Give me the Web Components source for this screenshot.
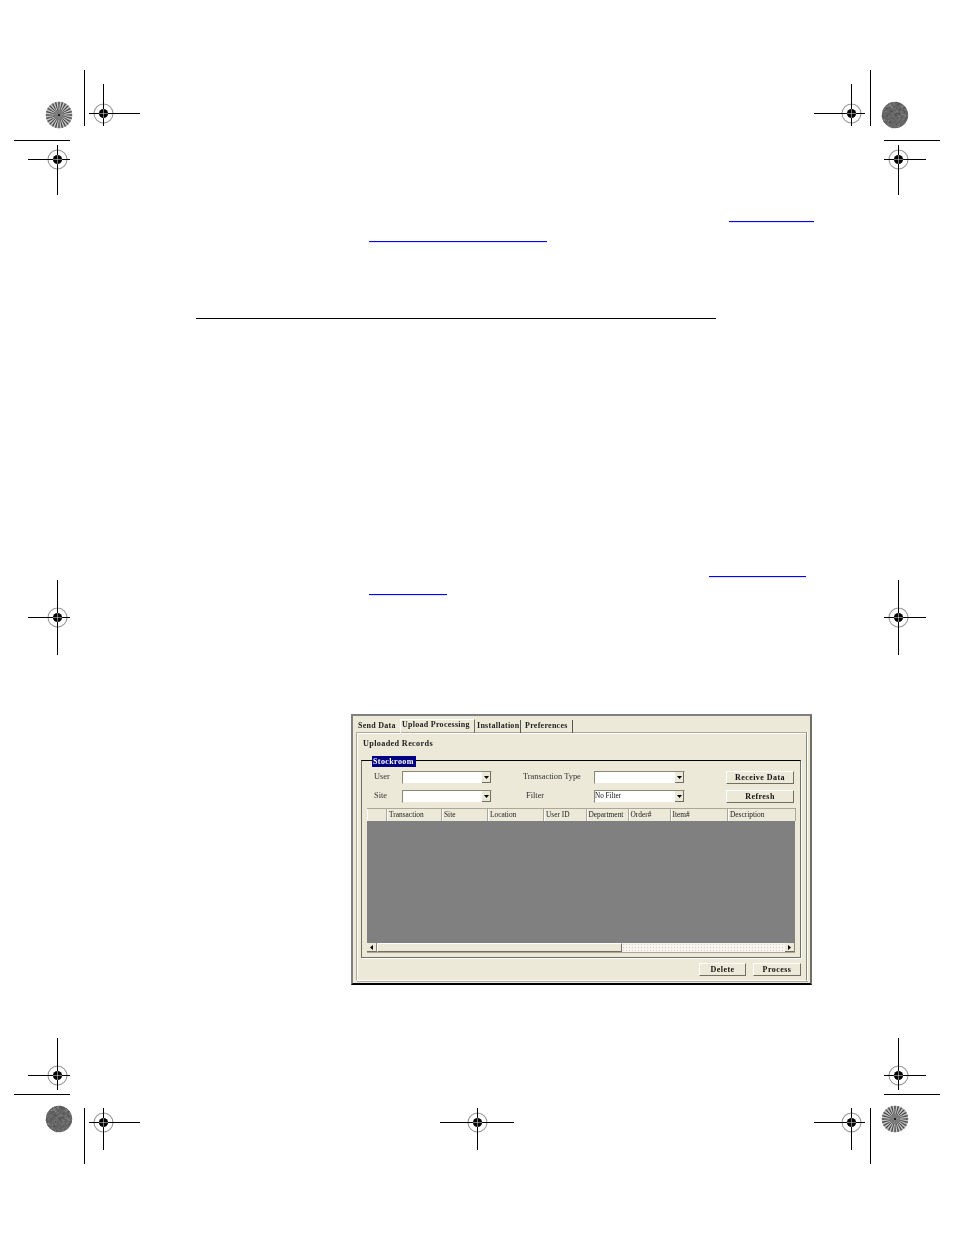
<!DOCTYPE html>
<html>
<head>
<meta charset="utf-8">
<title>Upload Processing</title>
<style>
  html, body { margin: 0; background: #fff; }
</style>
</head>
<body>
<doc-page>
  <crop-line slot="marks" x="84" y="70" h="56"></crop-line>
  <crop-line slot="marks" x="14" y="140" w="56"></crop-line>
  <crop-line slot="marks" x="870" y="70" h="56"></crop-line>
  <crop-line slot="marks" x="884" y="140" w="56"></crop-line>
  <crop-line slot="marks" x="14" y="1094" w="56"></crop-line>
  <crop-line slot="marks" x="84" y="1108" h="56"></crop-line>
  <crop-line slot="marks" x="884" y="1094" w="56"></crop-line>
  <crop-line slot="marks" x="870" y="1108" h="56"></crop-line>

  <reg-mark slot="marks" cx="103" cy="113" x1="89" x2="140" y1="84" y2="126"></reg-mark>
  <reg-mark slot="marks" cx="57" cy="159" x1="28" x2="70" y1="145" y2="195"></reg-mark>
  <reg-mark slot="marks" cx="851" cy="113" x1="814" x2="865" y1="84" y2="126"></reg-mark>
  <reg-mark slot="marks" cx="898" cy="159" x1="884" x2="926" y1="145" y2="195"></reg-mark>
  <reg-mark slot="marks" cx="57" cy="617" x1="28" x2="70" y1="580" y2="655"></reg-mark>
  <reg-mark slot="marks" cx="898" cy="617" x1="884" x2="926" y1="580" y2="655"></reg-mark>
  <reg-mark slot="marks" cx="57" cy="1075" x1="28" x2="70" y1="1038" y2="1090"></reg-mark>
  <reg-mark slot="marks" cx="898" cy="1075" x1="884" x2="926" y1="1038" y2="1090"></reg-mark>
  <reg-mark slot="marks" cx="103" cy="1122" x1="89" x2="140" y1="1108" y2="1150"></reg-mark>
  <reg-mark slot="marks" cx="851" cy="1122" x1="814" x2="865" y1="1108" y2="1150"></reg-mark>
  <reg-mark slot="marks" cx="477" cy="1122" x1="440" x2="514" y1="1108" y2="1150"></reg-mark>

  <star-disc slot="marks" cx="59" cy="115" kind="spoke"></star-disc>
  <star-disc slot="marks" cx="895" cy="115" kind="solid"></star-disc>
  <star-disc slot="marks" cx="59" cy="1119" kind="solid"></star-disc>
  <star-disc slot="marks" cx="895" cy="1119" kind="spoke"></star-disc>

  <doc-rule left="729" width="85" top="221" color="#0000ff"></doc-rule>
  <doc-rule left="369" width="178" top="19" color="#0000ff"></doc-rule>
  <doc-rule left="196" width="520" top="76" color="#000"></doc-rule>
  <doc-rule left="709" width="97" top="257" color="#0000ff"></doc-rule>
  <doc-rule left="369" width="78" top="17" color="#0000ff"></doc-rule>

  <upload-dialog></upload-dialog>
</doc-page>

<script>
'use strict';

// page canvas: crop marks go over it, rules and dialog are in flow
class DocPage extends HTMLElement {
  constructor() {
    super();
    this.attachShadow({ mode: 'open' }).innerHTML = `
      <style>
        :host { display: block; position: relative; width: 954px; height: 1235px; overflow: hidden; background: #fff; }
        .flow { display: flow-root; }
      </style>
      <slot name="marks"></slot>
      <div class="flow"><slot></slot></div>`;
  }
}

class DocRule extends HTMLElement {
  constructor() {
    super();
    const a = n => this.getAttribute(n);
    this.attachShadow({ mode: 'open' }).innerHTML = `
      <style>
        :host { display: block; height: 1px; width: ${a('width')}px; margin-left: ${a('left')}px; margin-top: ${a('top')}px; background: ${a('color')}; box-shadow: 0 1px 0 -0.2px ${a('color')}33; }
      </style>`;
  }
}

class CropLine extends HTMLElement {
  constructor() {
    super();
    const a = n => this.getAttribute(n);
    this.attachShadow({ mode: 'open' }).innerHTML = `
      <style>
        :host { display: block; position: absolute; left: ${a('x')}px; top: ${a('y')}px; width: ${a('w') || 1}px; height: ${a('h') || 1}px; background: #000; }
      </style>`;
  }
}

// registration target: thin grey ring, quartered black dot, cross hairs
class RegMark extends HTMLElement {
  constructor() {
    super();
    const n = k => Number(this.getAttribute(k));
    const cx = n('cx'), cy = n('cy'), x1 = n('x1'), x2 = n('x2'), y1 = n('y1'), y2 = n('y2');
    const w = x2 - x1, h = y2 - y1;
    const px = cx - x1 + 0.5, py = cy - y1 + 0.5;
    this.attachShadow({ mode: 'open' }).innerHTML = `
      <style>
        :host { display: block; position: absolute; left: ${x1}px; top: ${y1}px; width: ${w}px; height: ${h}px; }
        svg { display: block; }
      </style>
      <svg width="${w}" height="${h}" viewBox="0 0 ${w} ${h}">
        <circle cx="${px}" cy="${py}" r="9.5" fill="#fff" stroke="#999" stroke-width="1.1"/>
        <path d="M${px} 0V${h}M0 ${py}H${w}" stroke="#000" stroke-width="1" fill="none"/>
        <circle cx="${px}" cy="${py}" r="4.6" fill="#000"/>
        <path d="M${px} ${py - 4.6}V${py + 4.6}M${px - 4.6} ${py}H${px + 4.6}" stroke="#fff" stroke-width="0.45" fill="none"/>
      </svg>`;
  }
}

class StarDisc extends HTMLElement {
  constructor() {
    super();
    const cx = Number(this.getAttribute('cx')), cy = Number(this.getAttribute('cy'));
    const spoke = this.getAttribute('kind') === 'spoke';
    const R = 13.2, c = 14;
    let lines = '';
    let seed = 7;
    const rnd = () => (seed = (seed * 16807) % 2147483647) / 2147483647;
    if (spoke) {
      for (let i = 0; i < 48; i++) {
        const t = i / 48 * Math.PI * 2;
        const x = (c + Math.cos(t) * R).toFixed(2), y = (c + Math.sin(t) * R).toFixed(2);
        lines += `<line x1="${c}" y1="${c}" x2="${x}" y2="${y}" stroke="${i % 2 ? '#ddd' : '#333'}" stroke-width="0.8"/>`;
      }
      lines += `<circle cx="${c}" cy="${c}" r="5.5" fill="#777" opacity="0.8"/><circle cx="${c}" cy="${c}" r="1" fill="#000"/>`;
    } else {
      // mottled disc, short grey strokes at random
      for (let i = 0; i < 260; i++) {
        const t = rnd() * Math.PI * 2, r1 = Math.sqrt(rnd()) * R;
        const a2 = rnd() * Math.PI * 2, len = 1 + rnd() * 2;
        const g = Math.floor(70 + rnd() * 70).toString(16).padStart(2, '0');
        const x = c + Math.cos(t) * r1, y = c + Math.sin(t) * r1;
        let x2 = x + Math.cos(a2) * len, y2 = y + Math.sin(a2) * len;
        if (Math.hypot(x2 - c, y2 - c) > R) { x2 = x; y2 = y; }
        lines += `<line x1="${x.toFixed(2)}" y1="${y.toFixed(2)}" x2="${x2.toFixed(2)}" y2="${y2.toFixed(2)}" stroke="#${g}${g}${g}" stroke-width="0.8"/>`;
      }
    }
    this.attachShadow({ mode: 'open' }).innerHTML = `
      <style>
        :host { display: block; position: absolute; left: ${cx - c}px; top: ${cy - c}px; width: 28px; height: 28px; }
        svg { display: block; }
      </style>
      <svg width="28" height="28" viewBox="0 0 28 28">
        <circle cx="${c}" cy="${c}" r="${R}" fill="${spoke ? '#8c8c8c' : '#666'}"/>${lines}
      </svg>`;
  }
}

// small 3d button
class WinButton extends HTMLElement {
  constructor() {
    super();
    this.attachShadow({ mode: 'open' }).innerHTML = `
      <style>
        :host {
          display: flex; align-items: center; justify-content: center; box-sizing: border-box;
          height: 13px; background: #ece9d8; color: #111;
          border: 1px solid; border-color: #fff #716f64 #716f64 #fff;
          font: bold 8px/1 "Liberation Serif", serif; letter-spacing: 0.45px;
        }
      </style>
      <slot></slot>`;
  }
}

class WinCombo extends HTMLElement {
  constructor() {
    super();
    this.attachShadow({ mode: 'open' }).innerHTML = `
      <style>
        :host {
          display: flex; box-sizing: border-box; height: 13px; background: #fff;
          border: 1px solid; border-color: #8a8778 #ece9d8 #ece9d8 #8a8778;
          font: 7.2px/1 "Liberation Serif", serif; color: #111;
        }
        .val { flex: 1; display: flex; align-items: center; overflow: hidden; white-space: nowrap; }
        .btn {
          flex: none; width: 9px; display: flex; align-items: center; justify-content: center;
          background: #ece9d8; border-right: 1px solid #716f64; border-bottom: 1px solid #716f64; box-sizing: border-box;
        }
        svg { display: block; }
      </style>
      <div class="val"><slot></slot></div>
      <div class="btn"><svg width="5" height="3" viewBox="0 0 5 3"><path d="M0 0H5L2.5 3Z" fill="#000"/></svg></div>`;
  }
}

class WinTab extends HTMLElement {
  constructor() {
    super();
    const active = this.hasAttribute('active');
    const a = n => this.getAttribute(n);
    this.attachShadow({ mode: 'open' }).innerHTML = `
      <style>
        :host {
          display: block; flex: none; box-sizing: border-box; width: ${a('w')}px; height: ${active ? 14 : 13}px; white-space: nowrap;
          margin-top: ${active ? 0 : 1}px; padding-left: ${a('pad')}px;
          ${a('plain') === null ? `border-right: 1px solid ${active ? '#716f64' : '#555'};` : ''}
          ${active ? 'border-left: 1px solid #fff; border-top: 1px solid #fff;' : ''}
          font: bold 8px/${active ? 9 : 11}px "Liberation Serif", serif; letter-spacing: 0.27px; color: #222;
        }
      </style>
      <slot></slot>`;
  }
}

class RecordGrid extends HTMLElement {
  constructor() {
    super();
    const cols = [['', 20], ['Transaction', 55], ['Site', 46], ['Location', 56], ['User ID', 42.5], ['Department', 42], ['Order#', 42], ['Item#', 57.5], ['Description', 68]];
    const heads = cols.map(([t, w]) => `<div class="h" style="width:${w}px">${t}</div>`).join('');
    this.attachShadow({ mode: 'open' }).innerHTML = `
      <style>
        :host { display: flex; flex-direction: column; box-sizing: border-box; height: 145px; width: 429px; background: #ece9d8; }
        .head { display: flex; height: 13px; flex: none; border-top: 1px solid #aca899; box-sizing: border-box; background: #ece9d8; }
        .h {
          box-sizing: border-box; flex: none; border-right: 1px solid #aca899; border-left: 1px solid #fff;
          padding-left: 1px; font: 7.4px/11px "Liberation Serif", serif; color: #222; white-space: nowrap; overflow: hidden;
        }
        .body { flex: 1; background: #808080; margin-right: 1px; }
        .bar { flex: none; display: flex; box-sizing: border-box; height: 10px; margin-right: 1px; border-bottom: 1px solid #aca899; }
        .arrow { flex: none; width: 10px; display: flex; align-items: center; justify-content: center; box-sizing: border-box; background: #ece9d8; border-right: 1px solid #8a8778; border-bottom: 1px solid #716f64; }
        .thumb { flex: none; width: 245px; box-sizing: border-box; background: #ece9d8; border-top: 1px solid #fff; border-left: 1px solid #fff; border-right: 1px solid #716f64; border-bottom: 1px solid #716f64; }
        .track { flex: 1; background-color: #f6f4ec; background-image: radial-gradient(#d8d5c6 0.5px, transparent 0.6px); background-size: 3px 3px; }
        svg { display: block; }
      </style>
      <div class="head">${heads}</div>
      <div class="body"></div>
      <div class="bar">
        <div class="arrow"><svg width="3" height="5" viewBox="0 0 3 5"><path d="M3 0V5L0 2.5Z"/></svg></div>
        <div class="thumb"></div>
        <div class="track"></div>
        <div class="arrow"><svg width="3" height="5" viewBox="0 0 3 5"><path d="M0 0V5L3 2.5Z"/></svg></div>
      </div>`;
  }
}

class UploadDialog extends HTMLElement {
  constructor() {
    super();
    this.attachShadow({ mode: 'open' }).innerHTML = `
      <style>
        :host {
          display: block; box-sizing: border-box; width: 461px; height: 271px; margin: 119px 0 0 351px;
          background: #ece9d8; border: 2px solid; border-color: #808080 #716f64 #000 #808080;
          padding: 3px; filter: blur(0.3px);
          font-family: "Liberation Serif", serif; color: #222;
        }
        .tabs { display: flex; height: 13px; align-items: flex-start; position: relative; }
        .panel {
          box-sizing: border-box; height: 249px; padding: 6px 5px 0 4px;
          border: 1px solid; border-color: #aca899 #8a8778 #fff #aca899;
          box-shadow: 1px 0 0 #fff, 1px 1px 0 #aca899, 1px 1px 0 #fff inset;
        }
        h2 { margin: 0; font: bold 8.2px/10px "Liberation Serif", serif; letter-spacing: 0.35px; color: #222; padding-left: 2px; }
        .box {
          position: relative; box-sizing: border-box; height: 198px; margin-top: 11px; padding: 10px 4px 0 5px;
          border-top: 1px solid #000; border-left: 1px solid #716f64; border-right: 1px solid #716f64; border-bottom: 1px solid #716f64;
          box-shadow: 1px 1px 0 #fff;
        }
        .legend {
          position: absolute; left: 10px; top: -5px; height: 11px; width: 44px; box-sizing: border-box;
          background: #000080; color: #fff; font: bold 8px/11px "Liberation Serif", serif; letter-spacing: 0.4px; padding-left: 1px; white-space: nowrap;
        }
        .filters {
          display: grid; grid-template-columns: 35px 90px 31px 71px 91px 41px 68px;
          grid-template-rows: 13px 13px; row-gap: 6px; align-items: center; height: 37px;
        }
        .lab { font: 8.4px/13px "Liberation Serif", serif; color: #333; white-space: nowrap; margin-top: -3px; }
        .first { padding-left: 7px; }
        .c { grid-column: 5; }
        .b { grid-column: 7; }
        .actions { display: flex; justify-content: flex-end; gap: 7px; margin-top: 5px; }
        .actions win-button:first-child { width: 47px; }
        .actions win-button:last-child { width: 48px; }
      </style>
      <div class="tabs">
        <win-tab w="44" pad="2" plain>Send Data</win-tab>
        <win-tab active w="75" pad="1">Upload Processing</win-tab>
        <win-tab w="46" pad="2">Installation</win-tab>
        <win-tab w="52" pad="4">Preferences</win-tab>
      </div>
      <div class="panel">
        <h2>Uploaded Records</h2>
        <div class="box">
          <div class="legend">Stockroom</div>
          <div class="filters">
            <span class="lab first" style="grid-column:1">User</span>
            <win-combo style="grid-column:2"></win-combo>
            <span class="lab" style="grid-column:4">Transaction Type</span>
            <win-combo class="c"></win-combo>
            <win-button class="b">Receive Data</win-button>
            <span class="lab first" style="grid-column:1">Site</span>
            <win-combo style="grid-column:2"></win-combo>
            <span class="lab" style="grid-column:4;padding-left:3px">Filter</span>
            <win-combo class="c">No Filter</win-combo>
            <win-button class="b">Refresh</win-button>
          </div>
          <record-grid></record-grid>
        </div>
        <div class="actions">
          <win-button>Delete</win-button>
          <win-button>Process</win-button>
        </div>
      </div>`;
  }
}

customElements.define('doc-page', DocPage);
customElements.define('doc-rule', DocRule);
customElements.define('crop-line', CropLine);
customElements.define('reg-mark', RegMark);
customElements.define('star-disc', StarDisc);
customElements.define('win-button', WinButton);
customElements.define('win-combo', WinCombo);
customElements.define('win-tab', WinTab);
customElements.define('record-grid', RecordGrid);
customElements.define('upload-dialog', UploadDialog);
</script>
</body>
</html>
